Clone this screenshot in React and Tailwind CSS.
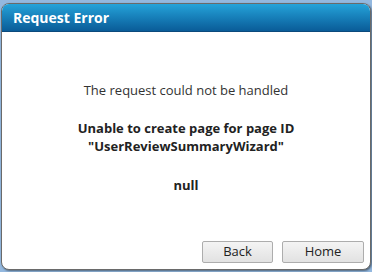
import React from 'react';

// Request error dialog
export default function App() {
  return (
    <div
      className="w-[372px] h-[272px] bg-[#93b8df] pt-[3px] pl-[1px] pr-[1px] pb-[2px]"
      style={{ fontFamily: '"Open Sans", sans-serif' }}
    >
      <div className="h-full flex flex-col bg-white border border-[#6a6a6a] rounded-[8px] overflow-hidden shadow-[1px_1px_2px_rgba(0,0,0,0.45)]">
        <header className="h-[28px] shrink-0 flex items-center pl-[11px] bg-gradient-to-b from-[#25a3da] to-[#0a5c98] border-b border-[#0b4a7c]">
          <h1 className="text-[14px] font-bold text-white leading-none">Request Error</h1>
        </header>

        <div className="flex-1 flex flex-col items-center text-center text-[13px] text-[#222]">
          <p className="mt-[49px] leading-[18px] text-[#333]">The request could not be handled</p>
          <p className="mt-[20px] leading-[18px] font-bold">
            Unable to create page for page ID
            <br />
            "UserReviewSummaryWizard"
          </p>
          <p className="mt-[21px] leading-[18px] font-bold">null</p>
        </div>

        <div className="flex justify-end gap-[9px] pr-[6px] pb-[6px]">
          <button className="w-[71px] h-[22px] text-[13px] text-[#222] border border-[#adadad] rounded-[2px] bg-gradient-to-b from-[#f4f4f4] to-[#e2e2e2]">
            Back
          </button>
          <button className="w-[82px] h-[22px] text-[13px] text-[#222] border border-[#adadad] rounded-[2px] bg-gradient-to-b from-[#f4f4f4] to-[#e2e2e2]">
            Home
          </button>
        </div>
      </div>
    </div>
  );
}
